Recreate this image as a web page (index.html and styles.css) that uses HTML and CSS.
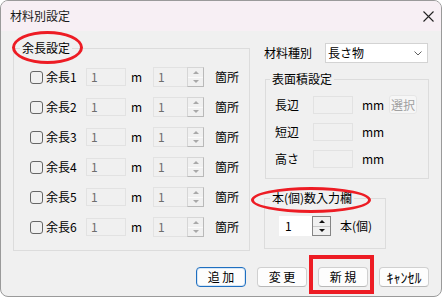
FILE: index.html
```html
<!DOCTYPE html>
<html lang="ja">
<head>
<meta charset="utf-8">
<title>材料別設定</title>
<link rel="stylesheet" href="styles.css">
</head>
<body>
<div class="window">
  <div class="titlebar">
    <span class="title">材料別設定</span>
    <svg class="close" viewBox="0 0 11 11" width="11" height="11"><path d="M0.5 0.5 L10.5 10.5 M10.5 0.5 L0.5 10.5" stroke="#222" stroke-width="1.1" fill="none"/></svg>
  </div>
  <div class="client">
    <div class="main">
      <fieldset class="group group-yocho">
        <legend>余長設定</legend>
        <div class="yrow"><span class="check"></span><span class="ylabel">余長1</span><span class="field">1</span><span class="unit-m">m</span><div class="spin"><span class="spin-field">1</span><span class="spin-btns"><span class="spin-btn"><i class="up"></i></span><span class="spin-btn"><i class="down"></i></span></span></div><span class="places">箇所</span></div>
        <div class="yrow"><span class="check"></span><span class="ylabel">余長2</span><span class="field">1</span><span class="unit-m">m</span><div class="spin"><span class="spin-field">1</span><span class="spin-btns"><span class="spin-btn"><i class="up"></i></span><span class="spin-btn"><i class="down"></i></span></span></div><span class="places">箇所</span></div>
        <div class="yrow"><span class="check"></span><span class="ylabel">余長3</span><span class="field">1</span><span class="unit-m">m</span><div class="spin"><span class="spin-field">1</span><span class="spin-btns"><span class="spin-btn"><i class="up"></i></span><span class="spin-btn"><i class="down"></i></span></span></div><span class="places">箇所</span></div>
        <div class="yrow"><span class="check"></span><span class="ylabel">余長4</span><span class="field">1</span><span class="unit-m">m</span><div class="spin"><span class="spin-field">1</span><span class="spin-btns"><span class="spin-btn"><i class="up"></i></span><span class="spin-btn"><i class="down"></i></span></span></div><span class="places">箇所</span></div>
        <div class="yrow"><span class="check"></span><span class="ylabel">余長5</span><span class="field">1</span><span class="unit-m">m</span><div class="spin"><span class="spin-field">1</span><span class="spin-btns"><span class="spin-btn"><i class="up"></i></span><span class="spin-btn"><i class="down"></i></span></span></div><span class="places">箇所</span></div>
        <div class="yrow"><span class="check"></span><span class="ylabel">余長6</span><span class="field">1</span><span class="unit-m">m</span><div class="spin"><span class="spin-field">1</span><span class="spin-btns"><span class="spin-btn"><i class="up"></i></span><span class="spin-btn"><i class="down"></i></span></span></div><span class="places">箇所</span></div>
      </fieldset>
      <div class="right">
        <div class="kind-row">
          <span class="kind-label">材料種別</span>
          <div class="select"><span>長さ物</span><svg class="chev" viewBox="0 0 8 5" width="8" height="5"><path d="M0.5 0.5 L4 4 L7.5 0.5" stroke="#606060" stroke-width="1" fill="none"/></svg></div>
        </div>
        <fieldset class="group group-area">
          <legend>表面積設定</legend>
          <div class="arow"><span class="alabel">長辺</span><span class="field"></span><span class="mm">mm</span><span class="btn-sel">選択</span></div>
          <div class="arow"><span class="alabel">短辺</span><span class="field"></span><span class="mm">mm</span></div>
          <div class="arow"><span class="alabel">高さ</span><span class="field"></span><span class="mm">mm</span></div>
        </fieldset>
        <fieldset class="group group-count">
          <legend>本(個)数入力欄</legend>
          <div class="count-row">
            <div class="spin spin-on"><span class="spin-field">1</span><span class="spin-btns"><span class="spin-btn"><i class="up"></i></span><span class="spin-btn"><i class="down"></i></span></span></div>
            <span class="count-unit">本(個)</span>
          </div>
        </fieldset>
      </div>
    </div>
    <div class="buttons">
      <span class="btn btn-default">追 加</span>
      <span class="btn">変 更</span>
      <span class="btn">新 規</span>
      <span class="btn btn-kana">ｷｬﾝｾﾙ</span>
    </div>
  </div>
  <div class="mark mark-ellipse-a"></div>
  <div class="mark mark-ellipse-b"></div>
  <div class="mark mark-rect"></div>
</div>
</body>
</html>
```

FILE: styles.css
```css
* { box-sizing: border-box; }
html, body { margin: 0; padding: 0; }
body {
  background: #ffffff;
  font-family: "Noto Sans CJK JP", "Noto Sans", sans-serif;
  font-size: 12px;
  line-height: 16px;
  color: #000;
}
.window {
  position: relative;
  width: 442px;
  height: 297px;
  border: 1px solid #9a9a9a;
  border-radius: 8px;
  overflow: hidden;
  background: #f0f0f0;
  display: flex;
  flex-direction: column;
}
.titlebar {
  flex: none;
  height: 30px;
  background: #f7eff4;
  display: flex;
  align-items: center;
  justify-content: space-between;
  padding: 0 7px 0 9px;
}
.title { font-size: 12px; line-height: 16px; color: #1b1b1b; }
.close { display: block; }
.client { flex: 1; padding: 9px 12px 0 12px; }
.main { display: flex; align-items: flex-start; }

.group {
  margin: 0;
  border: 1px solid #dcdcdc;
  min-width: 0;
}
.group legend {
  padding: 0 2px;
  line-height: 16px;
  font-size: 12px;
}

.group-yocho { width: 238px; padding: 6px 0 8px 6px; }
.yrow { display: flex; align-items: center; height: 30px; padding-left: 10px; }
.check {
  flex: none;
  width: 13px;
  height: 13px;
  border: 1px solid #666;
  border-radius: 3px;
}
.ylabel { width: 43px; padding-left: 3px; }
.field {
  flex: none;
  width: 40px;
  height: 18px;
  border: 1px solid #e2e2e2;
  color: #6d6d6d;
  padding-left: 4px;
  line-height: 16px;
}
.unit-m { width: 27px; padding-left: 5px; }
.spin { display: flex; height: 20px; flex: none; }
.spin-field {
  width: 34px;
  height: 20px;
  border: 1px solid #e2e2e2;
  border-right: none;
  color: #6d6d6d;
  padding-left: 4px;
  line-height: 17px;
}
.spin-btns {
  width: 17px;
  display: flex;
  flex-direction: column;
  border: 1px solid #b9b9b9;
  border-top-color: #d6d6d6;
  border-left-color: #d6d6d6;
}
.spin-btn {
  flex: 1;
  display: flex;
  align-items: center;
  justify-content: center;
  background: #f0f0f0;
}
.spin-btn + .spin-btn { border-top: 1px solid #fafafa; }
.up, .down { display: block; width: 0; height: 0; border-left: 3px solid transparent; border-right: 3px solid transparent; }
.up { border-bottom: 3px solid #a8a8a8; }
.down { border-top: 3px solid #a8a8a8; }
.places { margin-left: 11px; }

.right { display: flex; flex-direction: column; align-items: flex-start; }
.kind-row { display: flex; align-items: center; margin-top: 3px; padding-left: 14px; }
.kind-label { width: 61px; }
.select {
  width: 103px;
  height: 20px;
  background: #fff;
  border: 1px solid #d3d3d3;
  display: flex;
  align-items: center;
  justify-content: space-between;
  padding: 0 5px 0 2px;
}
.chev { display: block; }

.group.group-area { width: 164px; margin: 8px 0 0 15px; padding: 4px 0 6px 4px; }
.arow { display: flex; align-items: center; height: 27px; padding-left: 5px; }
.alabel { width: 38px; }
.mm { width: 36px; padding-left: 9px; }
.btn-sel {
  width: 28px;
  height: 19px;
  border-radius: 3px;
  background: #f6f6f6;
  border: 1px solid #e6e6e6;
  color: #a0a0a0;
  text-align: center;
  line-height: 17px;
}

.group.group-count { width: 122px; margin: 11px 0 0 14px; padding: 10px 0 12px 5px; }
.count-row { display: flex; align-items: center; padding-left: 9px; }
.spin-on .spin-field {
  width: 33px;
  background: #fff;
  border-color: #ffffff;
  color: #000;
  padding-left: 5px;
}
.spin-on .spin-btns { width: 19px; border-color: #858585; }
.spin-on .up { border-bottom-color: #111; }
.spin-on .down { border-top-color: #111; }
.spin-on .spin-btn + .spin-btn { border-top: 1px solid #c8c8c8; }
.count-unit { margin-left: 9px; }

.buttons { display: flex; justify-content: flex-end; gap: 11px; margin-top: 16px; }
.btn {
  width: 50px;
  height: 20px;
  background: #fdfdfd;
  border: 1px solid #d0d0d0;
  border-bottom-color: #b8b8b8;
  border-radius: 4px;
  text-align: center;
  line-height: 18px;
  font-size: 12px;
}
.btn-default { border: 1px solid #1f6fc0; box-shadow: inset 0 0 0 1px #d6e6f5; }
.btn-kana { font-size: 14px; }

.mark { position: absolute; border: 3px solid #ed1c24; pointer-events: none; }
.mark-ellipse-a { left: 11px; top: 30px; width: 71px; height: 33px; border-radius: 50%; }
.mark-ellipse-b { left: 250px; top: 186px; width: 120px; height: 26px; border-radius: 50%; }
.mark-rect { left: 308px; top: 254px; width: 65px; height: 39px; border-width: 4px; }
```
